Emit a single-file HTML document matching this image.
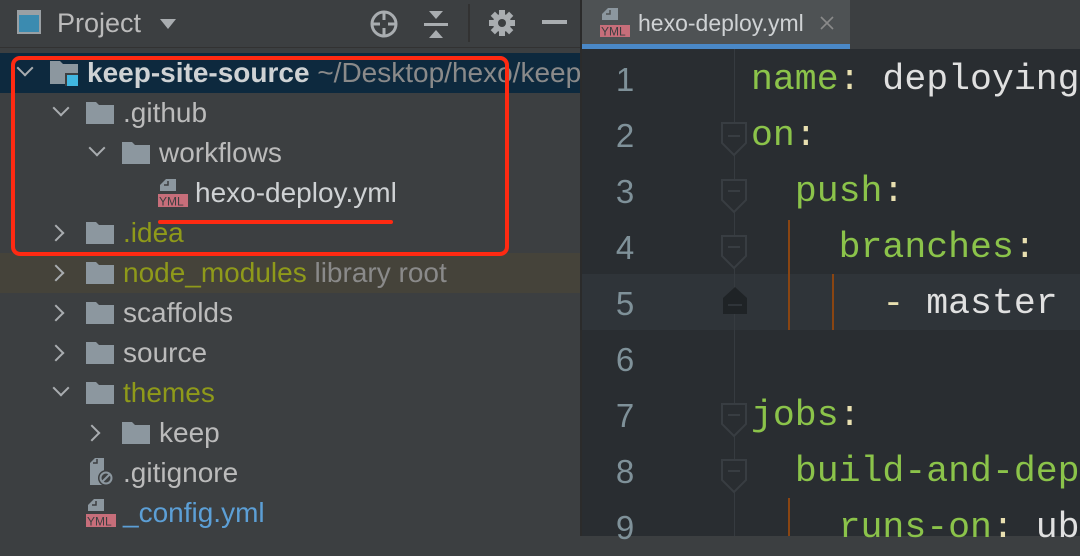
<!DOCTYPE html>
<html><head><meta charset="utf-8"><style>
*{margin:0;padding:0;box-sizing:border-box}
body{width:1080px;height:536px;overflow:hidden;background:#3c3f41;position:relative;font-family:"Liberation Sans",sans-serif}
.a{position:absolute}
.t{position:absolute;font-size:28px;color:#bbbbbb;line-height:40px;white-space:nowrap}
.row{position:absolute;left:0;width:580px;height:40px}
.fold{position:absolute;width:28px;height:22px}
.arr{position:absolute;width:12px;height:12px;border-right:2px solid #a9adb0;border-bottom:2px solid #a9adb0}
.code{position:absolute;font-family:"Liberation Mono",monospace;font-size:36.5px;line-height:56px;white-space:pre;color:#e0e0e0}
.g{color:#8bc34a}.c{color:#e8dfb0}
.ln{position:absolute;left:605px;width:40px;text-align:center;font-family:"Liberation Sans",sans-serif;font-size:33px;color:#7f9199;line-height:56px}
</style></head><body>
<div class="a" style="left:0;top:0;width:580px;height:48px;background:#3c3f41;border-bottom:1px solid #323232"></div>
<div class="a" style="left:17px;top:10px;width:24px;height:24px;border:2px solid #9aa0a4;background:#3b8bb0"></div>
<div class="a" style="left:17px;top:10px;width:24px;height:5px;background:#9aa0a4"></div>
<div class="t" style="left:57px;top:3px;font-size:27px;color:#bbbbbb">Project</div>
<div class="a" style="left:160px;top:19px;width:0;height:0;border-left:8px solid transparent;border-right:8px solid transparent;border-top:10px solid #a9adb0"></div>
<svg class="a" style="left:368px;top:8px" width="32" height="32" viewBox="0 0 32 32"><circle cx="16" cy="16" r="12" fill="none" stroke="#a9adb0" stroke-width="3"/><path d="M16 4v8M16 20v8M4 16h8M20 16h8" stroke="#a9adb0" stroke-width="3"/></svg>
<svg class="a" style="left:420px;top:8px" width="32" height="34" viewBox="0 0 32 34"><path d="M9 3h14l-7 8z M4 15h24v3H4z M16 22l7 8H9z" fill="#a9adb0"/></svg>
<div class="a" style="left:468px;top:4px;width:2px;height:38px;background:#323232"></div>
<svg class="a" style="left:488px;top:9px" width="28" height="28" viewBox="0 0 28 28"><g fill="#a9adb0"><circle cx="14" cy="14" r="9"/><rect x="11" y="1" width="6" height="26"/><rect x="1" y="11" width="26" height="6"/><rect x="11" y="1" width="6" height="26" transform="rotate(45 14 14)"/><rect x="11" y="1" width="6" height="26" transform="rotate(-45 14 14)"/></g><circle cx="14" cy="14" r="4" fill="#3c3f41"/></svg>
<div class="a" style="left:542px;top:20px;width:25px;height:4px;background:#a9adb0"></div>

<div class="row" style="top:53px;background:#0d293e"></div>
<div class="row" style="top:253px;background:#45433a"></div>

<div class="arr" style="left:19px;top:62px;transform:rotate(45deg)"></div>
<svg class="a" style="left:50px;top:61px" width="30" height="26"><path d="M0 0h10l3 3h15v20H0z" fill="#8c979f"/><rect x="15" y="12" width="13" height="13" fill="#3c3f41"/><rect x="17" y="14" width="11" height="11" fill="#40b6e0"/></svg>
<div class="t" style="left:87px;top:53px;font-weight:bold;color:#cfd2d4">keep-site-source <span style="font-weight:normal;color:#8a8a8a">~/Desktop/hexo/keep</span></div>

<div class="arr" style="left:55px;top:102px;transform:rotate(45deg)"></div>
<svg class="fold" style="left:86px;top:102px"><path d="M0 0h10l3 3h15v19H0z" fill="#8c979f"/></svg>
<div class="t" style="left:123px;top:93px">.github</div>

<div class="arr" style="left:91px;top:142px;transform:rotate(45deg)"></div>
<svg class="fold" style="left:122px;top:142px"><path d="M0 0h10l3 3h15v19H0z" fill="#8c979f"/></svg>
<div class="t" style="left:159px;top:133px">workflows</div>

<svg class="a" style="left:158px;top:179px" width="32" height="30"><path d="M8 0h10v12H2V6z" fill="#8c979f"/><path d="M6 6h4V2" fill="none" stroke="#3c3f41" stroke-width="1.5"/><rect x="0" y="15" width="30" height="13" fill="#c76e7a"/><text x="1" y="26.5" font-family="Liberation Sans" font-size="12" fill="#3c3f41">YML</text></svg>
<div class="t" style="left:195px;top:173px;color:#cfd2d4">hexo-deploy.yml</div>

<div class="arr" style="left:50px;top:227px;transform:rotate(-45deg)"></div>
<svg class="fold" style="left:86px;top:222px"><path d="M0 0h10l3 3h15v19H0z" fill="#8c979f"/></svg>
<div class="t" style="left:123px;top:213px;color:#8f9a1a">.idea</div>

<div class="arr" style="left:50px;top:267px;transform:rotate(-45deg)"></div>
<svg class="fold" style="left:86px;top:262px"><path d="M0 0h10l3 3h15v19H0z" fill="#8c979f"/></svg>
<div class="t" style="left:123px;top:253px;color:#8f9a1a">node_modules <span style="color:#8a8a8a">library root</span></div>

<div class="arr" style="left:50px;top:307px;transform:rotate(-45deg)"></div>
<svg class="fold" style="left:86px;top:302px"><path d="M0 0h10l3 3h15v19H0z" fill="#8c979f"/></svg>
<div class="t" style="left:123px;top:293px">scaffolds</div>

<div class="arr" style="left:50px;top:347px;transform:rotate(-45deg)"></div>
<svg class="fold" style="left:86px;top:342px"><path d="M0 0h10l3 3h15v19H0z" fill="#8c979f"/></svg>
<div class="t" style="left:123px;top:333px">source</div>

<div class="arr" style="left:55px;top:382px;transform:rotate(45deg)"></div>
<svg class="fold" style="left:86px;top:382px"><path d="M0 0h10l3 3h15v19H0z" fill="#8c979f"/></svg>
<div class="t" style="left:123px;top:373px;color:#8f9a1a">themes</div>

<div class="arr" style="left:86px;top:427px;transform:rotate(-45deg)"></div>
<svg class="fold" style="left:122px;top:422px"><path d="M0 0h10l3 3h15v19H0z" fill="#8c979f"/></svg>
<div class="t" style="left:159px;top:413px">keep</div>

<svg class="a" style="left:88px;top:458px" width="28" height="30"><path d="M7 0h9v27H2V5z" fill="#8c979f"/><path d="M5 5h4V1" fill="none" stroke="#3c3f41" stroke-width="1.5"/><circle cx="18" cy="20" r="8" fill="#3c3f41"/><circle cx="18" cy="20" r="5.5" fill="none" stroke="#8c979f" stroke-width="2"/><path d="M14 24l8-8" stroke="#8c979f" stroke-width="2"/></svg>
<div class="t" style="left:123px;top:453px">.gitignore</div>

<svg class="a" style="left:86px;top:499px" width="32" height="30"><path d="M8 0h10v12H2V6z" fill="#8c979f"/><path d="M6 6h4V2" fill="none" stroke="#3c3f41" stroke-width="1.5"/><rect x="0" y="15" width="30" height="13" fill="#c76e7a"/><text x="1" y="26.5" font-family="Liberation Sans" font-size="12" fill="#3c3f41">YML</text></svg>
<div class="t" style="left:123px;top:493px;color:#5c9fd6">_config.yml</div>

<div class="a" style="left:11px;top:56px;width:498px;height:200px;border:4px solid #ff2a12;border-radius:9px"></div>
<div class="a" style="left:158px;top:220px;width:235px;height:4px;background:#ff2a12;border-radius:2px"></div>

<div class="a" style="left:580px;top:0;width:2px;height:536px;background:#2b2b2b"></div>
<div class="a" style="left:582px;top:0;width:498px;height:48px;background:#3c3f41"></div>
<div class="a" style="left:582px;top:0;width:268px;height:44px;background:#4e5254"></div>
<div class="a" style="left:582px;top:44px;width:268px;height:5px;background:#4a88c7"></div>
<svg class="a" style="left:600px;top:8px" width="32" height="30"><path d="M8 0h10v12H2V6z" fill="#8c979f"/><path d="M6 6h4V2" fill="none" stroke="#4e5254" stroke-width="1.5"/><rect x="0" y="17" width="30" height="12" fill="#c76e7a"/><text x="1" y="27.5" font-family="Liberation Sans" font-size="12" fill="#3c3f41">YML</text></svg>
<div class="t" style="left:638px;top:3px;font-size:23px;color:#cfd2d4">hexo-deploy.yml</div>
<svg class="a" style="left:820px;top:16px" width="14" height="14"><path d="M1 1l12 12M13 1L1 13" stroke="#8a8a8a" stroke-width="1.6"/></svg>

<div class="a" style="left:582px;top:49px;width:498px;height:487px;background:#292d31"></div>
<div class="a" style="left:582px;top:274px;width:498px;height:56px;background:#2f3439"></div>
<div class="a" style="left:734px;top:49px;width:1px;height:487px;background:#363b40"></div>
<div class="a" style="left:788px;top:220px;width:2px;height:110px;background:#8a4512"></div>
<div class="a" style="left:832px;top:274px;width:2px;height:56px;background:#8a4512"></div>
<div class="a" style="left:788px;top:498px;width:2px;height:38px;background:#8a4512"></div>

<svg class="a" style="left:720px;top:121px" width="28" height="36"><path d="M2 2h24v20l-12 12L2 22z" fill="#292d31" stroke="#383d42" stroke-width="2"/><path d="M8 15h12" stroke="#383d42" stroke-width="2"/></svg>
<svg class="a" style="left:720px;top:178px" width="28" height="36"><path d="M2 2h24v20l-12 12L2 22z" fill="#292d31" stroke="#383d42" stroke-width="2"/><path d="M8 13h12" stroke="#383d42" stroke-width="2"/></svg>
<svg class="a" style="left:720px;top:234px" width="28" height="36"><path d="M2 2h24v20l-12 12L2 22z" fill="#292d31" stroke="#383d42" stroke-width="2"/><path d="M8 13h12" stroke="#383d42" stroke-width="2"/></svg>
<svg class="a" style="left:722px;top:286px" width="26" height="30"><path d="M1 28V12L13 1l12 11v16z" fill="#1f2326"/><path d="M6 19h14" stroke="#2f3439" stroke-width="2"/></svg>
<svg class="a" style="left:720px;top:402px" width="28" height="36"><path d="M2 2h24v20l-12 12L2 22z" fill="#292d31" stroke="#383d42" stroke-width="2"/><path d="M8 13h12" stroke="#383d42" stroke-width="2"/></svg>
<svg class="a" style="left:720px;top:458px" width="28" height="36"><path d="M2 2h24v20l-12 12L2 22z" fill="#292d31" stroke="#383d42" stroke-width="2"/><path d="M8 13h12" stroke="#383d42" stroke-width="2"/></svg>

<div class="ln" style="top:52px">1</div>
<div class="ln" style="top:108px">2</div>
<div class="ln" style="top:164px">3</div>
<div class="ln" style="top:220px">4</div>
<div class="ln" style="top:276px">5</div>
<div class="ln" style="top:332px">6</div>
<div class="ln" style="top:388px">7</div>
<div class="ln" style="top:444px">8</div>
<div class="ln" style="top:500px">9</div>

<div class="code" style="left:751px;top:52px"><span class="g">name</span><span class="c">:</span> deploying</div>
<div class="code" style="left:751px;top:108px"><span class="g">on</span><span class="c">:</span></div>
<div class="code" style="left:751px;top:164px">  <span class="g">push</span><span class="c">:</span></div>
<div class="code" style="left:751px;top:220px">    <span class="g">branches</span><span class="c">:</span></div>
<div class="code" style="left:751px;top:276px">      <span class="c">-</span> master</div>
<div class="code" style="left:751px;top:388px"><span class="g">jobs</span><span class="c">:</span></div>
<div class="code" style="left:751px;top:444px">  <span class="g">build-and-dep</span></div>
<div class="code" style="left:751px;top:500px">    <span class="g">runs-on</span><span class="c">:</span> ub</div>
</body></html>
